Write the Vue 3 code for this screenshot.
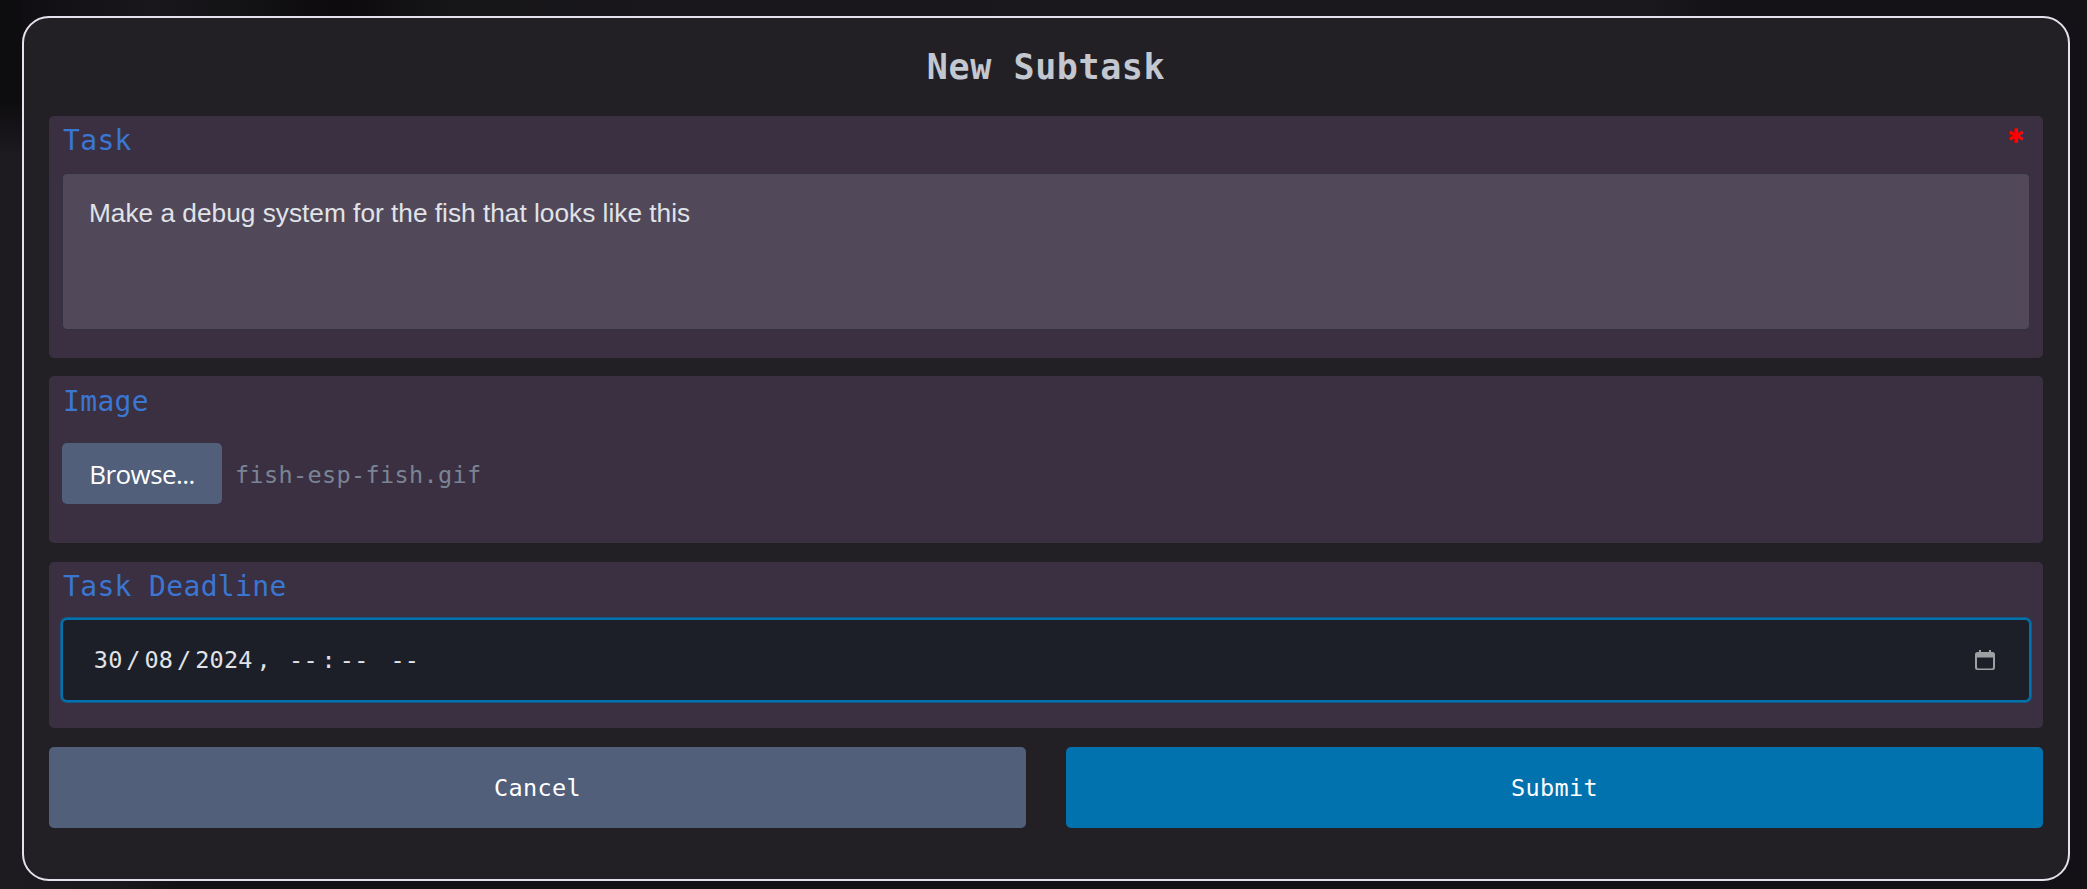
<script setup>
const fields = [
  { text: '30', sep: '/' },
  { text: '08', sep: '/' },
  { text: '2024', sep: ', ' },
  { text: '--', sep: ':' },
  { text: '--', sep: ' ' },
  { text: '--', sep: '' },
]
</script>

<template>
  <main class="page">
    <form class="card" @submit.prevent>
      <h1 class="title">New Subtask</h1>

      <section class="group group-task">
        <div class="label-row">
          <label class="label">Task</label>
          <span class="required">*</span>
        </div>
        <div class="textarea">Make a debug system for the fish that looks like this</div>
      </section>

      <section class="group group-image">
        <label class="label">Image</label>
        <div class="file-row">
          <button type="button" class="browse">Browse...</button>
          <span class="file-name">fish-esp-fish.gif</span>
        </div>
      </section>

      <section class="group group-deadline">
        <label class="label">Task Deadline</label>
        <div class="datetime">
          <div class="parts">
            <template v-for="(f, i) in fields" :key="i">
              <span class="part">{{ f.text }}</span><span class="sep">{{ f.sep }}</span>
            </template>
          </div>
          <svg class="calendar" viewBox="0 0 20 20">
            <path fill="#9fa0a4" fill-rule="evenodd" d="M4 0h2v2h8V0h2v2h1.5A2.5 2.5 0 0 1 20 4.500V17.500A2.500 2.500 0 0 1 17.500 20H2.500A2.500 2.500 0 0 1 0 17.500V4.500A2.500 2.500 0 0 1 2.500 2H4zM2 7.500V17Q2 18.500 3.500 18.500H16.500Q18 18.500 18 17V7.500z" />
          </svg>
        </div>
      </section>

      <div class="actions">
        <button type="button" class="btn cancel">Cancel</button>
        <button type="submit" class="btn submit">Submit</button>
      </div>
    </form>
  </main>
</template>

<style>
body {
  margin: 0;
  background: #151318;
}
</style>

<style scoped>
* {
  box-sizing: border-box;
}
.page {
  height: 889px;
  padding: 16px 17px 8px 22px;
  overflow: hidden;
  font-family: "DejaVu Sans Mono", monospace;
  background:
    linear-gradient(180deg, #0d0c0e 0, #0d0c0e 100px, #1d1a20 155px, #1d1a20 100%) 0 0 / 22px 889px no-repeat,
    linear-gradient(90deg, #0e0c10 0, #19171c 150px, #131214 240px, #0c0a0d 340px, #161517 450px, #19171c 700px, #1a181d 1650px, #141217 1720px) 0 0 / 100% 40px no-repeat,
    linear-gradient(90deg, #1d1a20 0, #1a181d 120px, #131116 180px, #131116 100%);
}
.card {
  display: flex;
  flex-direction: column;
  width: 2048px;
  height: 865px;
  padding: 0 25px;
  border: 2px solid #e6e1ec;
  border-radius: 27px;
  background: #222024;
}
.title {
  margin: 0;
  height: 98px;
  line-height: 98px;
  text-align: center;
  font-size: 35px;
  letter-spacing: 0.6px;
  color: #c2c7d0;
}
.group {
  border-radius: 5px;
  background: #3a3041;
  padding: 0 13px;
}
.group-task {
  height: 242px;
  margin-bottom: 18px;
}
.group-image {
  height: 167px;
  margin-bottom: 19px;
}
.group-deadline {
  height: 166px;
  margin-bottom: 19px;
}
.label-row {
  display: flex;
  justify-content: space-between;
  height: 57px;
}
.label {
  display: block;
  height: 48px;
  padding-left: 1px;
  line-height: 50px;
  font-size: 28px;
  letter-spacing: 0.35px;
  color: #3a76d2;
}
.group-image .label {
  line-height: 52px;
}
.required {
  margin-right: 6px;
  line-height: 49px;
  font-size: 28px;
  font-weight: bold;
  -webkit-text-stroke: 0.8px #ff0000;
  color: #ff0000;
}
.textarea {
  height: 157px;
  padding: 19px 26px;
  border: 1px solid #333245;
  border-radius: 5px;
  background: #514859;
  font-family: "Liberation Sans", Arial, sans-serif;
  font-size: 26.25px;
  line-height: 40px;
  color: #e0e3e7;
}
.file-row {
  display: flex;
  align-items: center;
  gap: 13px;
  margin-top: 19px;
}
.browse {
  width: 160px;
  height: 61px;
  padding: 0;
  border: 0;
  border-radius: 5px;
  background: #525f7a;
  color: #fff;
  font-family: "Open Sans", "Noto Sans", sans-serif;
  font-size: 26px;
  letter-spacing: -0.6px;
}
.file-name {
  padding-top: 2px;
  font-size: 23.5px;
  letter-spacing: 0.35px;
  color: #7b8495;
}
.datetime {
  display: flex;
  align-items: center;
  justify-content: space-between;
  height: 82px;
  margin: 9px 0 0;
  padding: 0 34px 0 27px;
  border: 1px solid #0172ad;
  border-radius: 5px;
  box-shadow: 0 0 0 1px #0172ad, 0 0 0 2px rgba(1, 114, 173, 0.65);
  background: #1c1f27;
}
.parts {
  display: flex;
  white-space: pre;
  font-size: 23.5px;
  letter-spacing: 0.25px;
  color: #e0e3e7;
}
.part {
  padding: 0 3.75px;
}
.calendar {
  width: 20px;
  height: 20px;
}
.actions {
  display: grid;
  grid-template-columns: 1fr 1fr;
  gap: 40px;
}
.btn {
  height: 81px;
  border: 0;
  border-radius: 5px;
  font-family: "DejaVu Sans Mono", monospace;
  font-size: 23.5px;
  letter-spacing: 0.35px;
  color: #fff;
}
.cancel {
  background: #525f7a;
}
.submit {
  background: #0172ad;
}
</style>
